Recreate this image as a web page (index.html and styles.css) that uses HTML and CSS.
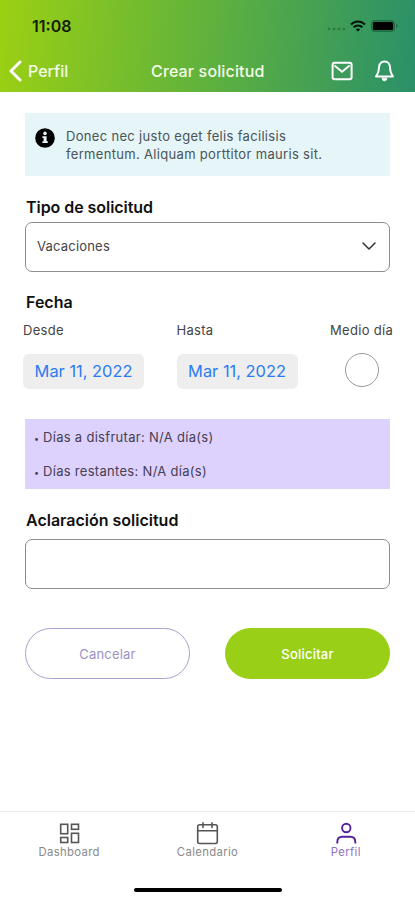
FILE: index.html
```html
<!DOCTYPE html>
<html lang="es">
<head>
<meta charset="utf-8">
<meta name="viewport" content="width=device-width, initial-scale=1">
<title>Crear solicitud</title>
<link rel="stylesheet" href="styles.css">
</head>
<body>
<div class="screen">
  <header class="header">
    <div class="status">
      <span class="clock">11:08</span>
      <div class="status-icons">
        <svg width="20" height="4" viewBox="0 0 20 4" fill="#2c7a3c"><circle cx="3" cy="2" r="1.300"/><circle cx="8" cy="2" r="1.300"/><circle cx="13" cy="2" r="1.300"/><circle cx="18" cy="2" r="1.300"/></svg>
        <svg class="wifi" width="16" height="12" viewBox="0 0 16 12" fill="none" stroke="#06150b" stroke-width="2"><path d="M1 4.500C5 .4 11 .4 15 4.500M3.600 7.300C6.100 4.900 9.900 4.900 12.400 7.300"/><path d="M8 11.500L5.800 9.300C7 8.200 9 8.200 10.200 9.300Z" fill="#06150b" stroke="none"/></svg>
        <svg class="battery" width="27" height="12" viewBox="0 0 27 12"><rect class="cell" x=".5" y=".5" width="23" height="11" rx="3"/><rect class="charge" x="2" y="2" width="20" height="8" rx="1.500"/><path d="M25 4v4q1.500-.6 1.500-2T25 4" fill="#1f6b43"/></svg>
      </div>
    </div>
    <nav class="nav">
      <a class="back">
        <svg width="13" height="22" viewBox="0 0 13 22" fill="none" stroke="#fff" stroke-width="3" stroke-linecap="round" stroke-linejoin="round"><path d="M11 2L2 11l9 9"/></svg>
        <span>Perfil</span>
      </a>
      <h1>Crear solicitud</h1>
      <div class="actions">
        <svg width="22" height="20" viewBox="0 0 22 20" fill="none" stroke="#fff" stroke-width="2" stroke-linejoin="round" stroke-linecap="round"><rect x="1.600" y="1.800" width="19" height="16.500" rx="2"/><path d="M4 5L11 10.800l7-5.800"/></svg>
        <svg width="20" height="22" viewBox="0 0 20 22" fill="none" stroke="#fff" stroke-width="2" stroke-linejoin="round" stroke-linecap="round"><path d="M9.500 1.500C5.900 1.500 4 4.300 4 7.500c0 5-1.300 6.500-2.900 8.900h16.800c-1.600-2.400-2.900-3.900-2.900-8.900 0-3.200-1.900-6-5.500-6Z"/><path d="M7.200 18.500a2.300 2.300 0 0 0 4.600 0Z" fill="#fff" stroke-width="1"/></svg>
      </div>
    </nav>
  </header>

  <main class="content">
    <section class="info">
      <svg width="20" height="20" viewBox="0 0 20 20"><circle cx="10" cy="10" r="9.800" fill="#000"/><circle cx="10" cy="5.400" r="1.800" fill="#e5f5f8"/><path d="M7.400 8.300h4.200v5h1.200V15H7.400v-1.700h1.200V10H7.400z" fill="#e5f5f8"/></svg>
      <p>Donec nec justo eget felis facilisis<br>fermentum. Aliquam porttitor mauris sit.</p>
    </section>

    <h2 class="h-tipo">Tipo de solicitud</h2>
    <div class="field select">
      <span>Vacaciones</span>
      <svg width="14" height="8" viewBox="0 0 14 8" fill="none" stroke="#333" stroke-width="1.500" stroke-linecap="round" stroke-linejoin="round"><path d="M1 1l6 6 6-6"/></svg>
    </div>

    <h2 class="h-fecha">Fecha</h2>
    <div class="dates">
      <div class="col"><label>Desde</label><span class="pill">Mar 11, 2022</span></div>
      <div class="col"><label>Hasta</label><span class="pill">Mar 11, 2022</span></div>
      <div class="col half"><label>Medio día</label><span class="radio"></span></div>
    </div>

    <ul class="summary">
      <li>Días a disfrutar: N/A día(s)</li>
      <li>Días restantes: N/A día(s)</li>
    </ul>

    <h2 class="h-aclaracion">Aclaración solicitud</h2>
    <div class="field"></div>

    <div class="buttons">
      <button class="cancel">Cancelar</button>
      <button class="submit">Solicitar</button>
    </div>
  </main>

  <footer class="tabs">
    <a class="tab">
      <svg width="24" height="24" viewBox="0 0 24 24" fill="none" stroke="#555" stroke-width="1.600"><rect x="3.700" y="2.300" width="7" height="9.400"/><rect x="14.500" y="2.300" width="7" height="5"/><rect x="3.700" y="15.500" width="7" height="5"/><rect x="14.500" y="11.300" width="7" height="9.200"/></svg>
      <span>Dashboard</span>
    </a>
    <a class="tab">
      <svg width="24" height="24" viewBox="0 0 24 24" fill="none" stroke="#555" stroke-width="1.600" stroke-linecap="round"><rect x="2.700" y="2.800" width="19.600" height="18.700" rx="2"/><path d="M2.700 8.700h19.600M8 .9v4.500M17 .9v4.500"/></svg>
      <span>Calendario</span>
    </a>
    <a class="tab active">
      <svg width="24" height="24" viewBox="0 0 24 24" fill="none" stroke="#56219c" stroke-width="1.900"><circle cx="12.300" cy="6" r="4.200"/><path d="M3.300 21.500v-1.500Q3.300 14.800 8.300 14.800h8q5 0 5 5.200v1.500"/></svg>
      <span>Perfil</span>
    </a>
  </footer>
  <div class="home"></div>
</div>
</body>
</html>
```
FILE: styles.css
```css
* { box-sizing: border-box; }
body { margin: 0; background: #fff; font-family: Inter, "Liberation Sans", sans-serif; color: #444; }
h1, h2, p, ul { margin: 0; padding: 0; }
.screen { width: 415px; height: 900px; display: flex; flex-direction: column; background: #fff; overflow: hidden; }

.header { height: 92px; flex: none; background: linear-gradient(95deg, #9bd013 0%, #60b23d 50%, #2a9069 100%); }
.status { height: 50px; padding: 1px 17px 0 32px; display: flex; justify-content: space-between; align-items: center; }
.clock { font-size: 16px; font-weight: 600; line-height: 20px; color: #142006; }
.status-icons { display: flex; align-items: center; }
.status-icons svg:first-child { margin-top: 7px; }
.wifi { margin-left: 4px; }
.battery { margin-left: 5px; }
.cell { fill: #247747; stroke: #1f6b43; }
.charge { fill: #000; }
.nav { height: 42px; padding: 0 20px 0 9px; display: grid; grid-template-columns: 142px 1fr auto; align-items: center; color: #f4fbe9; }
.back { display: flex; align-items: center; gap: 6px; font-size: 16px; font-weight: 500; }
.nav h1 { font-size: 16px; font-weight: 500; line-height: 20px; letter-spacing: .15px; }
.actions { display: flex; justify-content: flex-end; align-items: center; gap: 22px; }

.content { flex: 1; padding: 21px 25px 0; }
.info { height: 63px; background: #e5f5f8; display: flex; gap: 11px; padding: 15px 10px 0; }
.info p { font-size: 13px; line-height: 17.5px; letter-spacing: .32px; color: #4a5356; white-space: nowrap; }
h2 { font-size: 16px; font-weight: 600; line-height: 20px; color: #111; padding-left: 1px; white-space: nowrap; }
.h-tipo { margin-top: 21px; letter-spacing: -.05px; }
.field { height: 50px; border: 1px solid #8c8c8c; border-radius: 7px; margin-top: 5px; }
.select { display: flex; align-items: center; justify-content: space-between; padding: 0 13px 2px 11px; font-size: 13px; letter-spacing: .2px; }
.h-fecha { margin-top: 20px; }
.dates { display: grid; grid-template-columns: 153.500px 154px 63px; margin: 10px -4px 0 -2px; }
.col { display: flex; flex-direction: column; align-items: flex-start; gap: 15px; }
.col label { font-size: 13px; line-height: 17px; letter-spacing: .3px; white-space: nowrap; }
.pill { width: 121px; height: 35px; line-height: 35px; border-radius: 6px; background: #eee; color: #2d7bf0; font-size: 16.4px; text-align: center; white-space: nowrap; }
.half { align-items: center; }
.half label, .radio { margin-left: -1px; }
.radio { width: 34px; height: 34px; border: 1.5px solid #999; border-radius: 50%; margin-top: -1px; }
.summary { list-style: none; height: 70px; margin-top: 30px; background: #ddd1fd; padding: 10px 9px; display: flex; flex-direction: column; gap: 16px; font-size: 13px; line-height: 17px; letter-spacing: .3px; color: #454052; }
.summary li::before { content: "•"; display: inline-block; width: 9px; font-size: 9px; letter-spacing: 0; }
.h-aclaracion { margin-top: 21px; }
.h-aclaracion + .field { margin-top: 9px; }
.buttons { display: flex; justify-content: space-between; margin-top: 39px; }
button { width: 165px; height: 51px; border-radius: 26px; font: 500 13px Inter, "Liberation Sans", sans-serif; letter-spacing: .2px; padding: 0; }
.cancel { background: #fff; border: 1px solid #a9a0cf; color: #9b91c5; font-weight: 400; }
.submit { background: #99cf16; border: 0; color: #fff; }

.tabs { height: 76px; flex: none; display: grid; grid-template-columns: repeat(3, 1fr); border-top: 1px solid #e9e9e9; padding-top: 10px; }
.tab { display: flex; flex-direction: column; align-items: center; font-size: 11.3px; line-height: 13px; letter-spacing: .35px; color: #898989; }
.active { color: #9071bd; }
.home { flex: none; width: 148px; height: 4px; margin: 1px auto 8px; border-radius: 2px; background: #000; }
```
